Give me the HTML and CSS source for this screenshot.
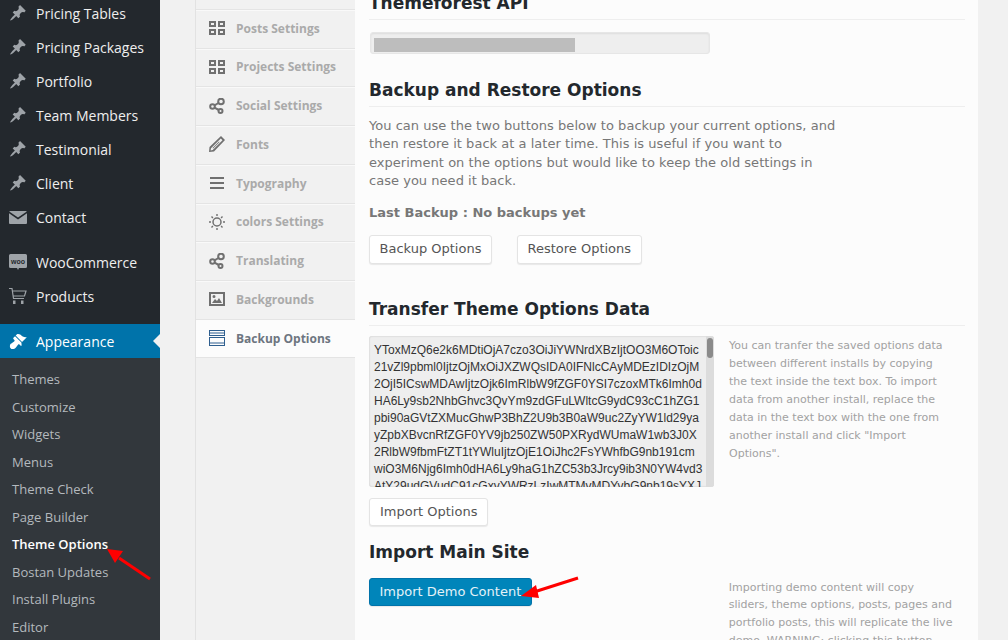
FILE: index.html
```html
<!DOCTYPE html>
<html lang="en">
  <head>
    <meta charset="utf-8">
    <title>Theme Options</title>
    <link rel="stylesheet" href="styles.css">
  </head>
  <body>
    <svg class="defs">
      <symbol id="pin" viewBox="0 0 20 20"><path d="M10.44 3.02l1.82-1.82 6.36 6.35-1.83 1.82c-1.05-.68-2.48-.57-3.41.36l-.75.75c-.92.93-1.04 2.35-.35 3.41l-1.83 1.82-2.41-2.41-2.8 2.79c-.42.42-3.38 2.71-3.8 2.29s1.86-3.39 2.28-3.81l2.79-2.79L4.1 9.36l1.83-1.82c1.05.69 2.48.57 3.4-.36l.75-.75c.93-.92 1.05-2.35.36-3.41z"/></symbol>
      <symbol id="grid" viewBox="0 0 16 14"><path fill-rule="evenodd" d="M0 0h7v6H0zM2 2v2h3V2zM9 0h7v6H9zM11 2v2h3V2zM0 8h7v6H0zM2 10v2h3v-2zM9 8h7v6H9zM11 10v2h3v-2z"/></symbol>
      <symbol id="share" viewBox="0 0 16 16"><g fill="none" stroke="currentColor" stroke-width="2"><circle cx="3.5" cy="8.5" r="2.3"/><circle cx="12" cy="3.5" r="2.8"/><circle cx="11.5" cy="13" r="2"/><path d="M5.5 7.3l4-2.3M5.5 9.7l4.3 2.3"/></g></symbol>
    </svg>

    <div class="page">
      <aside class="sidebar">
        <ul class="menu">
          <li><svg class="ico"><use href="#pin"/></svg>Pricing Tables</li>
          <li><svg class="ico"><use href="#pin"/></svg>Pricing Packages</li>
          <li><svg class="ico"><use href="#pin"/></svg>Portfolio</li>
          <li><svg class="ico"><use href="#pin"/></svg>Team Members</li>
          <li><svg class="ico"><use href="#pin"/></svg>Testimonial</li>
          <li><svg class="ico"><use href="#pin"/></svg>Client</li>
          <li><svg class="ico" viewBox="0 0 18 18"><path d="M1 3h16a1 1 0 0 1 .8.4L9 9.6.2 3.4A1 1 0 0 1 1 3zM0 5.2l9 6.3 9-6.3V15a1 1 0 0 1-1 1H1a1 1 0 0 1-1-1z"/></svg>Contact</li>
          <li class="sep"><svg class="ico" viewBox="0 0 18 18"><path d="M1.500 1h15a1.500 1.500 0 0 1 1.500 1.500v11a1.500 1.500 0 0 1-1.500 1.500H10l-1 2-1-2H1.500A1.500 1.500 0 0 1 0 13.500v-11A1.500 1.500 0 0 1 1.500 1z"/><text class="woo" x="9" y="10.500">woo</text></svg>WooCommerce</li>
          <li><svg class="ico" viewBox="0 0 18 18"><path fill="none" stroke="currentColor" stroke-width="1.200" d="M0 1.500h3l1.500 10h10.500M3.500 4h13.500l-1.500 5H4.300"/><path d="M4 13.500h2.500V17H4zM12 13.500h2.500V17H12z"/></svg>Products</li>
        </ul>
        <div class="current"><svg class="ico" viewBox="0 0 20 20"><path d="M14.480 11.060L7.410 3.990l1.500-1.500c.5-.56 2.300-.47 3.510.32 1.210.8 1.430 1.280 2.910 2.100 1.180.64 2.450 1.260 4.450.85zm-.71.71L6.700 4.700 4.930 6.470c-.39.39-.39 1.020 0 1.410l1.060 1.060c.39.39.39 1.030 0 1.420-.6.6-1.430 1.110-2.210 1.690-.35.26-.7.53-1.010.84C1.430 13.230 1 14.400 1 16c0 1.400 1.200 2.900 2.900 2.900 1.600 0 2.770-.43 3.770-1.770.31-.31.58-.66.84-1.010.58-.78 1.090-1.610 1.690-2.210.39-.39 1.020-.39 1.410 0l1.060 1.060c.39.39 1.020.39 1.410 0z"/></svg>Appearance</div>
        <ul class="submenu">
          <li>Themes</li>
          <li>Customize</li>
          <li>Widgets</li>
          <li>Menus</li>
          <li>Theme Check</li>
          <li>Page Builder</li>
          <li class="on">Theme Options</li>
          <li>Bostan Updates</li>
          <li>Install Plugins</li>
          <li>Editor</li>
        </ul>
      </aside>

      <div class="wrap">
        <nav class="tabs">
          <a><svg class="tab-ico"><use href="#grid"/></svg>Posts Settings</a>
          <a><svg class="tab-ico"><use href="#grid"/></svg>Projects Settings</a>
          <a><svg class="tab-ico"><use href="#share"/></svg>Social Settings</a>
          <a><svg class="tab-ico" viewBox="0 0 16 16"><path fill-rule="evenodd" d="M12 0l4 4L5 15.500 0 16l.5-5zM11.800 2.500L2 12.300l-.4 2.100 2.100-.4 9.800-9.800zM10 5.500L3.500 12l.6.6 6.500-6.500z"/></svg>Fonts</a>
          <a><svg class="tab-ico" viewBox="0 0 16 16"><path d="M1 2h14v2H1zM1 7h14v2H1zM1 12h14v2H1z"/></svg>Typography</a>
          <a><svg class="tab-ico" viewBox="0 0 16 16"><circle cx="8" cy="8" r="4" fill="none" stroke="currentColor" stroke-width="1.500"/><path d="M7.300 0h1.400v2H7.300zM7.300 14h1.400v2H7.300zM0 7.300h2v1.400H0zM14 7.300h2v1.400h-2zM2 3l1-1 1.400 1.400-1 1zM11.600 12.600l1-1L14 13l-1 1zM2 13l1.400-1.400 1 1L3 14zM11.600 3.400L13 2l1 1-1.400 1.400z"/></svg>colors Settings</a>
          <a><svg class="tab-ico"><use href="#share"/></svg>Translating</a>
          <a><svg class="tab-ico" viewBox="0 0 16 14"><path fill-rule="evenodd" d="M0 0h16v14H0zM2 2v10h12V2zM3 11l3-4 2 2 2-3 3 5zM5 3a1.500 1.500 0 1 1 0 3 1.500 1.500 0 0 1 0-3z"/></svg>Backgrounds</a>
          <a class="active"><svg class="tab-ico" viewBox="0 0 16 16"><path fill="#2f5f8f" fill-rule="evenodd" d="M0 0h16v6H0zM1 1v1.500h14V1zM1 3.500V5h14V3.500zM0 7h16v9H0zM1 8v4.500h14V8zM1 13.500V15h14v-1.500z"/></svg>Backup Options</a>
        </nav>

        <main class="content">
          <h2 class="first">Themeforest API</h2>
          <div class="api-field"><span class="redacted"></span></div>

          <h2>Backup and Restore Options</h2>
          <p class="desc">You can use the two buttons below to backup your current options, and then restore it back at a later time. This is useful if you want to experiment on the options but would like to keep the old settings in case you need it back.</p>
          <p class="last">Last Backup : No backups yet</p>
          <div class="btn-row">
            <span class="btn">Backup Options</span>
            <span class="btn">Restore Options</span>
          </div>

          <h2 class="transfer">Transfer Theme Options Data</h2>
          <div class="split">
            <div class="data-box">
              <div class="data-text">YToxMzQ6e2k6MDtiOjA7czo3OiJiYWNrdXBzIjtOO3M6OToic<br>21vZl9pbml0IjtzOjMxOiJXZWQsIDA0IFNlcCAyMDEzIDIzOjM<br>2OjI5ICswMDAwIjtzOjk6ImRlbW9fZGF0YSI7czoxMTk6Imh0d<br>HA6Ly9sb2NhbGhvc3QvYm9zdGFuLWltcG9ydC93cC1hZG1<br>pbi90aGVtZXMucGhwP3BhZ2U9b3B0aW9uc2ZyYW1ld29ya<br>yZpbXBvcnRfZGF0YV9jb250ZW50PXRydWUmaW1wb3J0X<br>2RlbW9fbmFtZT1tYWluIjtzOjE1OiJhc2FsYWhfbG9nb191cm<br>wiO3M6Njg6Imh0dHA6Ly9haG1hZC53b3Jrcy9ib3N0YW4vd3<br>AtY29udGVudC91cGxvYWRzLzIwMTMvMDYvbG9nb19sYXJ</div>
              <span class="thumb"></span>
            </div>
            <p class="note">You can tranfer the saved options data between different installs by copying the text inside the text box. To import data from another install, replace the data in the text box with the one from another install and click "Import Options".</p>
          </div>
          <span class="btn import">Import Options</span>

          <h2 class="plain">Import Main Site</h2>
          <div class="split demo">
            <span class="btn primary">Import Demo Content</span>
            <p class="note">Importing demo content will copy sliders, theme options, posts, pages and portfolio posts, this will replicate the live demo. WARNING: clicking this button</p>
          </div>
        </main>
      </div>
    </div>

    <!-- red annotation arrows -->
    <svg class="arrow arrow-a" width="50" height="36" viewBox="0 0 50 36"><path d="M44 31L13 10"/><polygon points="1,1 17,3 9,15"/></svg>
    <svg class="arrow arrow-b" width="64" height="26" viewBox="0 0 64 26"><path d="M58 3L14 17"/><polygon points="1,21 16,10 19,23"/></svg>
  </body>
</html>
```
FILE: styles.css
```css
html, body {
    margin: 0;
    height: 640px;
    overflow: hidden;
    background: #f1f1f1;
}

.defs {
    display: none;
}

.page {
    display: flex;
    height: 640px;
    overflow: hidden;
}

/* admin menu */
.sidebar {
    width: 160px;
    flex: none;
    background: #23282d;
    font-family: "Open Sans", sans-serif;
    color: #eee;
}

.menu {
    list-style: none;
    margin: -4px 0 11px;
    padding: 0;
}

.menu li {
    display: flex;
    align-items: center;
    height: 34px;
    font-size: 14px;
}

.menu li.sep {
    margin-top: 11px;
}

.ico {
    width: 18px;
    height: 18px;
    margin: 0 9px 0 9px;
    fill: #9ea3a8;
    color: #9ea3a8;
    flex: none;
}

.woo {
    font: bold 7px "Liberation Sans", sans-serif;
    fill: #23282d;
    text-anchor: middle;
}

.current {
    display: flex;
    align-items: center;
    height: 34px;
    font-size: 14px;
    color: #fff;
    background: #0073aa;
    position: relative;
}

.current .ico {
    fill: #fff;
}

.current::after {
    content: "";
    position: absolute;
    right: 0;
    top: 10px;
    border: 7px solid transparent;
    border-right-color: #f1f1f1;
    border-left-width: 0;
}

.submenu {
    list-style: none;
    margin: 0;
    padding: 8.1px 0 0;
    height: 282px;
    box-sizing: border-box;
    background: #32373c;
    font-size: 13px;
    color: #b4b9be;
}

.submenu li {
    height: 27.55px;
    line-height: 27.55px;
    padding-left: 12px;
}

.submenu li.on {
    color: #fff;
    font-weight: 600;
}

/* options panel */
.wrap {
    display: flex;
    flex: none;
    width: 783px;
    margin-left: 35px;
    border-left: 1px solid #e2e2e2;
    box-sizing: border-box;
}

.tabs {
    width: 159px;
    flex: none;
    padding-top: 8.75px;
    font-family: "Open Sans", sans-serif;
    font-size: 12px;
    font-weight: 700;
    color: #aaa;
}

.tabs a {
    display: flex;
    align-items: center;
    height: 38.75px;
    box-sizing: border-box;
    border-top: 1px solid #e4e4e4;
    box-shadow: inset 0 1px 0 #f9f9f9;
    padding: 0 0 1px 13px;
}

.tabs a.active {
    background: #fcfcfc;
    color: #6d7580;
    border-bottom: 1px solid #e4e4e4;
    box-shadow: none;
    padding-bottom: 0;
}

.tab-ico {
    width: 16px;
    height: 16px;
    margin-right: 11px;
    fill: #707070;
    color: #707070;
    flex: none;
}

.content {
    width: 623px;
    flex: none;
    box-sizing: border-box;
    padding: 0 13px 0 14px;
    background: #fcfcfc;
    font-family: "DejaVu Sans", sans-serif;
    color: #777;
}

h2 {
    margin: 0;
    font-size: 17px;
    line-height: 24px;
    font-weight: 700;
    color: #23282d;
    padding-bottom: 4px;
    border-bottom: 1px solid #eee;
}

h2.first {
    margin-top: -9px;
}

.api-field {
    margin: 12px 0 24px 1px;
    width: 340px;
    height: 22px;
    box-sizing: border-box;
    padding: 5px 0 0 3px;
    background: #eee;
    border: 1px solid #e6e6e6;
    border-radius: 3px;
    box-shadow: inset 0 1px 2px rgba(0, 0, 0, .07);
}

.redacted {
    display: block;
    width: 201px;
    height: 14px;
    background: #bdbdbd;
}

.desc {
    margin: 9.5px 0 0;
    width: 470px;
    font-size: 13px;
    line-height: 18.5px;
    letter-spacing: .03px;
}

.last {
    margin: 13px 0 0;
    font-size: 13px;
    line-height: 18px;
    font-weight: 700;
}

.btn-row {
    display: flex;
    gap: 25px;
    margin-top: 13px;
}

.btn {
    display: inline-block;
    height: 29px;
    line-height: 26px;
    box-sizing: border-box;
    padding: 0 9.5px;
    font-size: 13px;
    color: #555;
    background: #fff;
    border: 1px solid #e4e4e4;
    border-radius: 3px;
    box-shadow: 0 1px 1px rgba(0, 0, 0, .08);
    white-space: nowrap;
}

h2.transfer {
    margin-top: 33px;
}

.split {
    display: flex;
    gap: 15px;
}

.data-box {
    position: relative;
    width: 345px;
    height: 151px;
    flex: none;
    margin-top: 10px;
    box-sizing: border-box;
    padding: 6px 0 0 5px;
    overflow: hidden;
    background: #eee;
    border-radius: 3px;
    box-shadow: inset 0 0 2px rgba(0, 0, 0, .2);
    font-family: "Liberation Sans", sans-serif;
    font-size: 12px;
    line-height: 17px;
    color: #333;
}

/* scrollbar track */
.data-box::before {
    content: "";
    position: absolute;
    top: 0;
    right: 0;
    bottom: 0;
    width: 8px;
    background: #dcdcdc;
}

.data-text {
    white-space: nowrap;
}

.thumb {
    position: absolute;
    top: 2px;
    right: 1px;
    width: 6px;
    height: 20px;
    border-radius: 3px;
    background: #8a8a8a;
}

.note {
    margin: 0;
    font-size: 11px;
    line-height: 18.1px;
    color: #a2a2a2;
    width: 222px;
    padding-top: 11px;
}

.btn.import {
    display: block;
    width: 119px;
    height: 28px;
    line-height: 26px;
    padding: 0 10px;
    margin-top: 11px;
}

h2.plain {
    border: 0;
    margin-top: 14px;
    padding: 0;
}

.demo {
    gap: 197px;
    margin-top: 14px;
}

.demo .note {
    padding-top: 0;
    margin-top: 1px;
    width: 225px;
    line-height: 17.8px;
}

.btn.primary {
    flex: none;
    background: #0085ba;
    border-color: #0073aa;
    color: #e4f2f8;
    height: 28px;
    line-height: 26px;
}

.arrow {
    position: absolute;
}

.arrow path {
    stroke: #f00;
    stroke-width: 3;
    fill: none;
}

.arrow polygon {
    fill: #f00;
}

.arrow-a {
    left: 106px;
    top: 548px;
}

.arrow-b {
    left: 520px;
    top: 575px;
}
```
